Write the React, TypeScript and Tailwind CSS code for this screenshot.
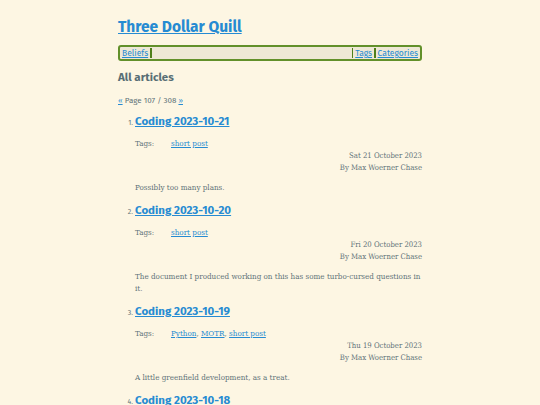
import React from "react";

interface Article {
  title: string;
  tags: string[];
  date: string;
  summary: string;
}

const articles: Article[] = [
  { title: "Coding 2023-10-21", tags: ["short post"], date: "Sat 21 October 2023", summary: "Possibly too many plans." },
  {
    title: "Coding 2023-10-20",
    tags: ["short post"],
    date: "Fri 20 October 2023",
    summary: "The document I produced working on this has some turbo-cursed questions in it.",
  },
  { title: "Coding 2023-10-19", tags: ["Python", "MOTR", "short post"], date: "Thu 19 October 2023", summary: "A little greenfield development, as a treat." },
  { title: "Coding 2023-10-18", tags: ["short post"], date: "Wed 18 October 2023", summary: "More of the same." },
];

const sans = "font-['Fira_Sans','Lato','Noto_Sans',sans-serif]";
const slab = "font-['Roboto_Slab','DejaVu_Serif_Condensed','Liberation_Serif',serif]";

const App: React.FC = () => {
  return (
    <div className="min-h-screen w-full bg-[#fdf6e3] text-[#5f7379]">
      <div className="mx-auto w-[304px] pt-[15px]">
        {/* Titre du site */}
        <h1 className={`${sans} text-[15.5px] leading-[24px] font-bold`}>
          <a href="#" className="text-[#268bd2] underline">Three Dollar Quill</a>
        </h1>

        {/* Barre de navigation */}
        <nav className={`${sans} mt-[6px] flex h-[16px] items-center rounded-[3px] border-2 border-[#62902a] bg-[#eee8d5] text-[8.5px] leading-[12px]`}>
          <a href="#" className="px-[2px] text-[#268bd2] underline">Beliefs</a>
          <span className="h-[10px] w-[1.5px] bg-[#4f7f1a]" />
          <span className="flex-1" />
          <span className="h-[10px] w-[1.5px] bg-[#4f7f1a]" />
          <a href="#" className="px-[2px] text-[#268bd2] underline">Tags</a>
          <span className="h-[10px] w-[1.5px] bg-[#4f7f1a]" />
          <a href="#" className="px-[2px] text-[#268bd2] underline">Categories</a>
        </nav>

        <h2 className={`${sans} mt-[7px] text-[11.5px] leading-[18px] font-bold text-[#586e75]`}>All articles</h2>

        <p className={`${sans} mt-[9px] text-[8px] leading-[12px]`}>
          <a href="#" className="text-[#268bd2] underline">«</a> Page 107 / 308{" "}
          <a href="#" className="text-[#268bd2] underline">»</a>
        </p>

        {/* Liste des articles */}
        <ol className="mt-[5px] flex flex-col gap-[7px] pl-[17px]">
          {articles.map((a, i) => (
            <li key={a.title} className="flex flex-col">
              <div className="flex items-baseline gap-[2px]">
                <span className={`${sans} w-[12px] -ml-[14px] text-right text-[7px]`}>{i + 1}.</span>
                <a href="#" className={`${sans} text-[11.5px] leading-[18px] font-bold text-[#268bd2] underline`}>
                  {a.title}
                </a>
              </div>
              <div className={`${slab} mt-[8px] flex text-[8px] leading-[12px]`}>
                <span className="w-[36px]">Tags:</span>
                <span>
                  {a.tags.map((t, j) => (
                    <React.Fragment key={t}>
                      <a href="#" className="text-[#268bd2] underline">{t}</a>
                      {j < a.tags.length - 1 && ", "}
                    </React.Fragment>
                  ))}
                </span>
              </div>
              <div className={`${slab} flex flex-col items-end text-[7.7px] leading-[12px]`}>
                <span>{a.date}</span>
                <span>By Max Woerner Chase</span>
              </div>
              <p className={`${slab} mt-[8px] text-[8px] leading-[12px]`}>{a.summary}</p>
            </li>
          ))}
        </ol>
      </div>
    </div>
  );
};

export default App;
